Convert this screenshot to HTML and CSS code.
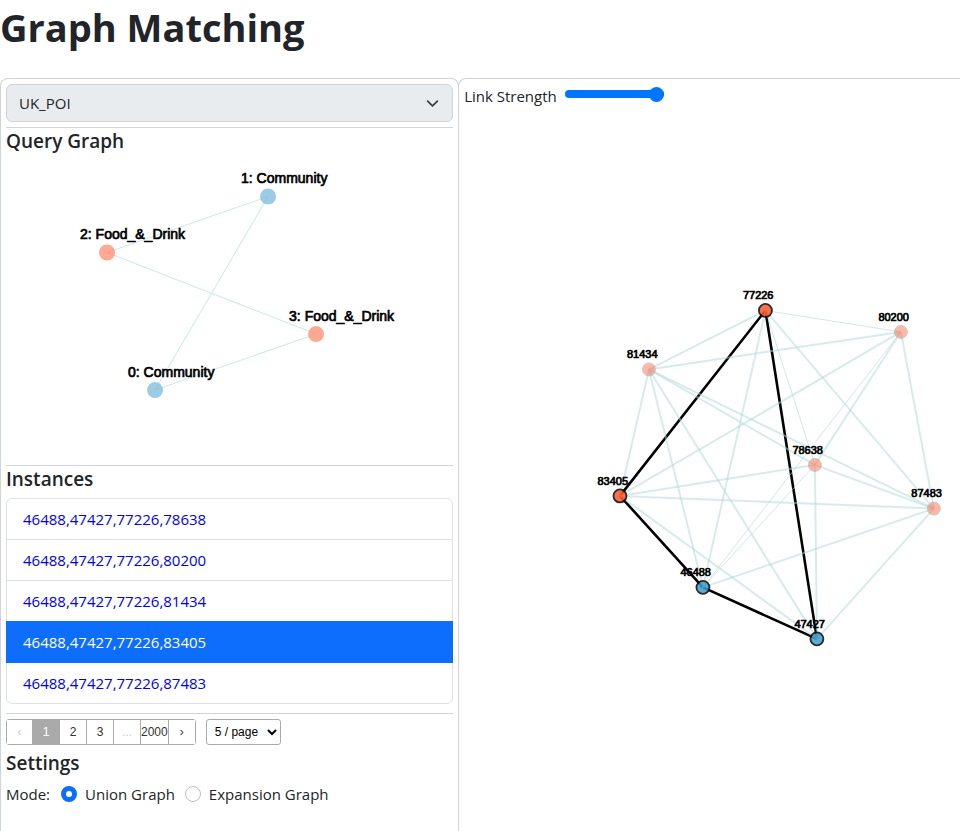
FILE: index.html
```
<!DOCTYPE html>
<html lang="en">
<head>
<meta charset="utf-8">
<meta name="viewport" content="width=device-width, initial-scale=1">
<title>Graph Matching</title>
<link rel="stylesheet" href="styles.css">
</head>
<body>
<h1>Graph Matching</h1>
<main class="workspace">
  <section class="panel sidebar">
    <div class="dataset">
      <select class="dataset-select" aria-label="Dataset"><option>UK_POI</option></select>
      <svg class="chevron" viewBox="0 0 16 16" aria-hidden="true"><path d="M2 5l6 6 6-6"/></svg>
    </div>
    <hr>
    <h2>Query Graph</h2>
    <svg class="graph query" viewBox="6 155 447 305" role="img" aria-label="Query graph">
      <g class="thin">
        <path d="M268 196.500L107 252.500M268 196.500L155 390M107 252.500L316 334M316 334L155 390"/>
      </g>
      <g class="query-nodes">
        <circle class="community" cx="268" cy="196.500" r="8"/>
        <circle class="food" cx="107" cy="252.500" r="8"/>
        <circle class="food" cx="316" cy="334" r="8"/>
        <circle class="community" cx="155" cy="390" r="8"/>
      </g>
      <g class="query-labels">
        <text x="241" y="183">1: Community</text>
        <text x="80" y="239">2: Food_&amp;_Drink</text>
        <text x="289" y="321">3: Food_&amp;_Drink</text>
        <text x="128" y="377">0: Community</text>
      </g>
    </svg>
    <hr>
    <h2>Instances</h2>
    <ul class="instances">
      <li><a href="#a">46488,47427,77226,78638</a></li>
      <li><a href="#b">46488,47427,77226,80200</a></li>
      <li><a href="#c">46488,47427,77226,81434</a></li>
      <li><a class="active" href="#d">46488,47427,77226,83405</a></li>
      <li><a href="#e">46488,47427,77226,87483</a></li>
    </ul>
    <hr>
    <div class="paging">
      <nav class="pages" aria-label="Pages">
        <button type="button" disabled>‹</button>
        <button type="button" class="current">1</button>
        <button type="button">2</button>
        <button type="button">3</button>
        <button type="button" disabled>...</button>
        <button type="button">2000</button>
        <button type="button">›</button>
      </nav>
      <select class="page-size" aria-label="Page size"><option>5 / page</option></select>
    </div>
    <h2>Settings</h2>
    <div class="mode">
      <span>Mode:</span>
      <label><input type="radio" name="mode" checked>Union Graph</label>
      <label><input type="radio" name="mode">Expansion Graph</label>
    </div>
  </section>
  <section class="panel result">
    <div class="strength">
      <label for="strength">Link Strength</label>
      <input id="strength" type="range" min="0" max="100" value="100">
    </div>
    <svg class="graph" viewBox="464 110 496 600" role="img" aria-label="Union graph">
      <g class="matched">
        <path d="M765.500 310.500L620 496M620 496L703 587.500M703 587.500L817 639M765.500 310.500L817 639"/>
      </g>
      <g class="thin">
        <path d="M765.500 310.500L901 332M765.500 310.500L815 465M901 332L703 587.500M815 465L703 587.500"/>
      </g>
      <g class="thick">
        <path d="M765.500 310.500L649 369.500"/>
        <path d="M765.500 310.500L703 587.500"/>
        <path d="M765.500 310.500L934 508.700"/>
        <path d="M901 332L649 369.500"/>
        <path d="M901 332L620 496"/>
        <path d="M901 332L815 465"/>
        <path d="M901 332L934 508.700"/>
        <path d="M649 369.500L620 496"/>
        <path d="M649 369.500L703 587.500"/>
        <path d="M649 369.500L817 639"/>
        <path d="M649 369.500L815 465"/>
        <path d="M649 369.500L934 508.700"/>
        <path d="M620 496L815 465"/>
        <path d="M620 496L934 508.700"/>
        <path d="M620 496L817 639"/>
        <path d="M815 465L817 639"/>
        <path d="M815 465L934 508.700"/>
        <path d="M934 508.700L703 587.500"/>
        <path d="M934 508.700L817 639"/>
      </g>
      <g class="faded-nodes">
        <circle cx="901" cy="332" r="6.500"/>
        <circle cx="649" cy="369.500" r="6.500"/>
        <circle cx="815" cy="465" r="6.500"/>
        <circle cx="934" cy="508.700" r="6.500"/>
      </g>
      <g class="matched-nodes">
        <circle class="place" cx="765.500" cy="310.500" r="6.500"/>
        <circle class="place" cx="620" cy="496" r="6.500"/>
        <circle class="hub" cx="703" cy="587.500" r="6.500"/>
        <circle class="hub" cx="817" cy="639" r="6.500"/>
      </g>
      <g class="result-labels">
        <text x="743" y="299">77226</text>
        <text x="878.500" y="321">80200</text>
        <text x="627" y="358">81434</text>
        <text x="792.500" y="454">78638</text>
        <text x="911.500" y="497">87483</text>
        <text x="597.500" y="485">83405</text>
        <text x="680.500" y="576">46488</text>
        <text x="794.500" y="628">47427</text>
      </g>
    </svg>
  </section>
</main>
</body>
</html>
```
FILE: styles.css
```
* { box-sizing: border-box; }
body {
  margin: 0;
  min-height: 100vh;
  display: flex;
  flex-direction: column;
  font: 15px/24px "Segoe UI", "Open Sans", "Noto Sans", sans-serif;
  color: #212529;
  background: #fff;
}
h1 { margin: 0 0 24px; font-size: 38px; line-height: 54px; font-weight: 700; }
h2 { margin: 0; font-size: 19px; line-height: 27px; font-weight: 600; }
hr { margin: 0; border: 0; border-top: 1px solid #ced4da; }
.workspace { flex: 1; display: grid; grid-template-columns: 11fr 12fr; }
.panel {
  min-width: 0;
  border: 1px solid #ced4da;
  border-bottom: 0;
  border-radius: 8px 8px 0 0;
  padding: 5px;
}
.result { margin-left: -1px; padding-right: 0; border-right: 0; border-top-right-radius: 0; }
.dataset { display: grid; align-items: center; margin-bottom: 5px; }
.dataset > * { grid-area: 1 / 1; }
.dataset-select {
  appearance: none;
  width: 100%;
  height: 38px;
  padding: 0 12px;
  border: 1px solid #ced4da;
  border-radius: 6px;
  background: #e9ecef;
  color: #212529;
  font: inherit;
}
.chevron { justify-self: end; width: 13px; height: 13px; margin-right: 14px; pointer-events: none; }
.chevron path { fill: none; stroke: #343a40; stroke-width: 2; stroke-linecap: round; stroke-linejoin: round; }
.graph { display: block; width: 100%; height: auto; }
.query { margin: 0 0 5px; }
.thin path, .thick path { fill: none; stroke: #b2d8d8; stroke-width: 1; opacity: .5; }
.thin path { opacity: .6; }
.thick path { stroke-width: 2; }
.matched path { fill: none; stroke: #000; stroke-width: 2.6; }
.query-nodes circle { opacity: .7; }
.community { fill: #72b7d9; }
.food { fill: #ff8464; }
.faded-nodes circle { fill: #ff7050; stroke: #999; stroke-width: 1; opacity: .5; }
.matched-nodes circle { stroke: #000; stroke-width: 1.8; opacity: .83; }
.place { fill: #ff5426; }
.hub { fill: #3a9bcb; }
text { font-family: "Liberation Sans", Arial, sans-serif; fill: #000; stroke: #000; stroke-width: .7; }
.query-labels { font-size: 14px; }
.result-labels { font-size: 11px; }
.instances { list-style: none; margin: 5px 0 9px; padding: 0; border: 1px solid #dee2e6; border-radius: 6px; }
.instances li + li { border-top: 1px solid #dee2e6; }
.instances a { display: block; padding: 8px 16px; color: #0000ee; text-decoration: none; }
.instances a.active { position: relative; margin: -1px; padding: 9px 17px; background: #0d6efd; color: #fff; }
.paging { display: flex; gap: 10px; margin: 5px 0; }
.pages { display: flex; border: 1px solid #aaa; border-radius: 3px; }
.pages button {
  min-width: 27px;
  height: 24px;
  padding: 0;
  border: 0;
  border-right: 1px solid #aaa;
  background: #fff;
  color: #333;
  font: 12px "Liberation Sans", Arial, sans-serif;
}
.pages button:first-child, .pages button:last-child { min-width: 26px; }
.pages button:last-child { border-right: 0; }
.pages button:disabled { color: #ccc; }
.pages .current { background: #aaa; color: #fff; }
.page-size {
  width: 75px;
  height: 26px;
  padding: 0 4px;
  border: 1px solid #aaa;
  border-radius: 3px;
  background: #fff;
  color: #000;
  font: 12px "Liberation Sans", Arial, sans-serif;
}
.mode { display: flex; align-items: center; gap: 10px; margin-top: 5px; }
.mode label { display: flex; align-items: center; gap: 8px; }
.mode span { margin-right: 1px; }
.mode input {
  appearance: none;
  width: 16px;
  height: 16px;
  margin: 0;
  border: 1px solid #bfbfbf;
  border-radius: 50%;
  background: #fff;
}
.mode input:checked { border: 5px solid #0d6efd; }
.strength { display: flex; align-items: flex-start; gap: 8px; height: 26px; }
.strength input {
  appearance: none;
  width: 99px;
  height: 8px;
  margin: 6px 0;
  border-radius: 4px;
  background: #0075ff;
}
.strength input::-webkit-slider-thumb { appearance: none; width: 15px; height: 15px; border-radius: 50%; background: #0075ff; }
```
